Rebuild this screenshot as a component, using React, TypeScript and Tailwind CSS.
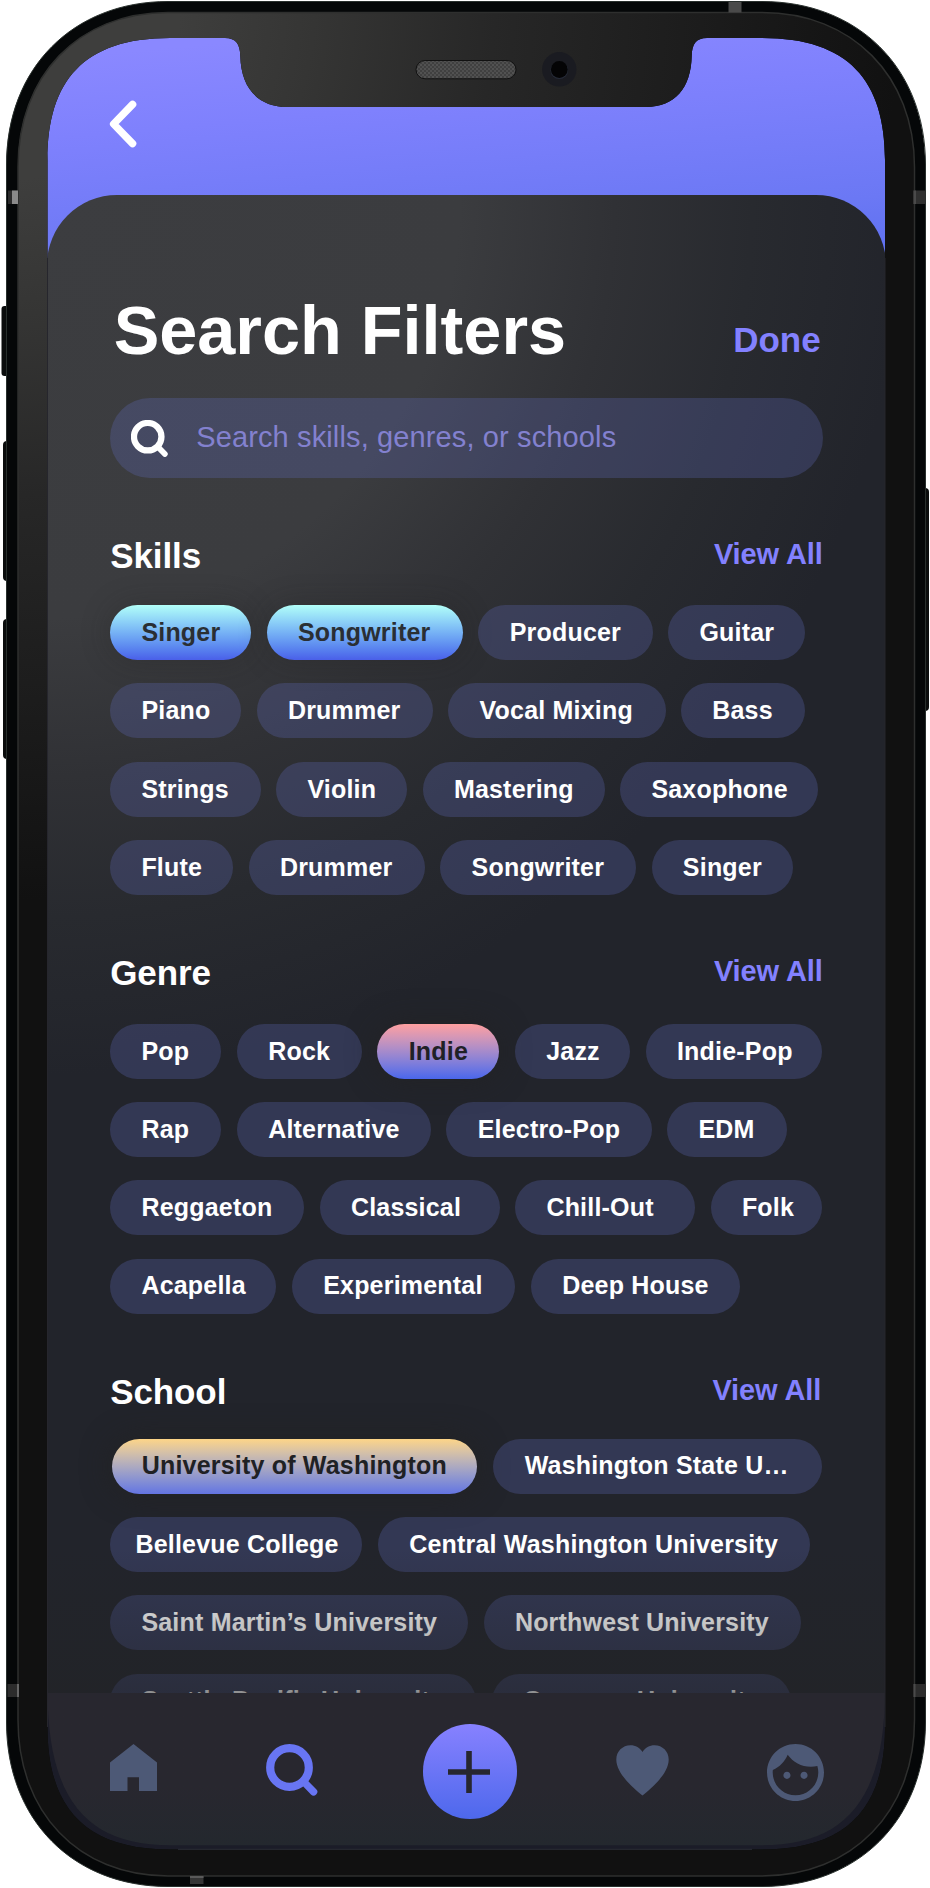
import React from "react";

type ChipData = { label: string; size: string; tone?: string };

const chip = (label: string, size: string, tone?: string): ChipData => ({ label, size, tone });

const aqua =
  "bg-linear-to-b from-[#b2fff8] to-[#4a5fe9] text-[#2a2f34] shadow-[0_0_30px_rgba(34,34,34,0.3)]";
const rose =
  "bg-linear-to-b from-[#ff9f9f] to-[#4a66ec] text-[#202126] shadow-[0_0_30px_rgba(34,34,34,0.7)]";
const amber =
  "ml-[1.5px] bg-linear-to-b from-[#fdd587] to-[#6474e2] text-[#202124] shadow-[0_0_30px_rgba(34,34,34,0.9)]";

const skills: ChipData[][] = [
  [
    chip("Singer", "w-[141px]", aqua),
    chip("Songwriter", "w-[196.3px]", aqua),
    chip("Producer", "w-[174.3px]"),
    chip("Guitar", "w-[137px]"),
  ],
  [
    chip("Piano", "w-[131px]"),
    chip("Drummer", "w-[176.2px]"),
    chip("Vocal Mixing", "w-[217.2px]"),
    chip("Bass", "w-[123.5px]"),
  ],
  [
    chip("Strings", "w-[150.5px]"),
    chip("Violin", "w-[131px]"),
    chip("Mastering", "w-[182px]"),
    chip("Saxophone", "w-[197.7px]"),
  ],
  [
    chip("Flute", "w-[123px]"),
    chip("Drummer", "w-[176.2px]"),
    chip("Songwriter", "w-[195.8px]"),
    chip("Singer", "w-[141px]"),
  ],
];

const genres: ChipData[][] = [
  [
    chip("Pop", "w-[111.3px]"),
    chip("Rock", "w-[125px]"),
    chip("Indie", "w-[122px]", rose),
    chip("Jazz", "w-[115.3px]"),
    chip("Indie-Pop", "w-[176.2px]"),
  ],
  [
    chip("Rap", "w-[111.3px]"),
    chip("Alternative", "w-[194px]"),
    chip("Electro-Pop", "w-[205.3px]"),
    chip("EDM", "w-[119.7px]"),
  ],
  [
    chip("Reggaeton", "w-[194px]"),
    chip("Classical", "w-[180px]"),
    chip("Chill-Out", "w-[180px]"),
    chip("Folk", "w-[111.5px]"),
  ],
  [
    chip("Acapella", "w-[166.3px]"),
    chip("Experimental", "w-[223.5px]"),
    chip("Deep House", "w-[209px]"),
  ],
];

const schools: ChipData[][] = [
  [
    chip("University of Washington", "w-[365px] pl-[30px]", amber),
    chip("Washington State U…", "w-[329px] ml-[1.3px]"),
  ],
  [
    chip("Bellevue College", "w-[252.3px] pl-[25.2px]"),
    chip("Central Washington University", "w-[432.3px]"),
  ],
  [chip("Saint Martin’s University", "w-[358px]"), chip("Northwest University", "w-[317px]")],
  [chip("Seattle Pacific University", "w-[366px]"), chip("Gonzaga University", "w-[299px]")],
];

function Chip({ label, size, tone }: ChipData) {
  const pad = size.includes("pl-") ? "" : "pl-[31.2px]";
  return (
    <button
      className={`flex h-[55px] shrink-0 items-center rounded-full text-left text-[25px] font-bold whitespace-nowrap ${size} ${pad} ${
        tone ?? "bg-[rgba(98,108,190,0.28)] text-white"
      }`}
    >
      {label}
    </button>
  );
}

function Section({
  title,
  rows,
  className,
  chipsClass,
  linkClass,
}: {
  title: string;
  rows: ChipData[][];
  className: string;
  chipsClass: string;
  linkClass: string;
}) {
  return (
    <section className={className}>
      <div className="flex h-[40px] items-start justify-between">
        <h2 className="text-[35px] leading-[39px] font-bold tracking-[-0.1px] text-white">{title}</h2>
        <a className={`text-[29px] leading-[36px] font-bold tracking-[-0.1px] text-[#8381ff] ${linkClass}`}>
          View All
        </a>
      </div>
      <div className={`flex flex-col gap-[23.3px] ${chipsClass}`}>
        {rows.map((row, r) => (
          <div key={r} className="flex gap-[15.5px]">
            {row.map((c, i) => (
              <Chip key={i} {...c} />
            ))}
          </div>
        ))}
      </div>
    </section>
  );
}

function SearchGlyph({ className, stroke }: { className: string; stroke: number }) {
  return (
    <svg viewBox="0 0 52 52" className={className} fill="none" stroke="currentColor" strokeLinecap="round">
      <circle cx="23.5" cy="23.5" r="19.3" strokeWidth={stroke} />
      <path d="M38 38 L47.6 47.8" strokeWidth={stroke - 0.8} />
    </svg>
  );
}

function TabBar() {
  return (
    <nav className="relative flex h-[157px] shrink-0 bg-linear-to-b from-[#28272f] from-60% to-[#23282e] pl-[63px] text-[#4d5976]">
      <svg viewBox="0 0 47 47" className="mt-[51px] h-[47px] w-[47px]" fill="currentColor">
        <path d="M23.5 0 L47 18.5 V47 H29 V33.3 H17.5 V47 H0 V18.5 Z" />
      </svg>
      <SearchGlyph className="mt-[51px] ml-[109px] h-[52px] w-[52px] text-[#6875f3]" stroke={8.2} />
      <button className="mt-[31.5px] ml-[104.5px] flex h-[94.5px] w-[94.5px] items-center justify-center rounded-full bg-linear-to-b from-[#8781ff] to-[#4d68ec]">
        <svg viewBox="0 0 42 42" className="mt-[1px] mr-[1.5px] h-[42px] w-[42px]" fill="none" stroke="#27272f" strokeWidth="5.6">
          <path d="M0 21 H42 M21 0 V42" />
        </svg>
      </button>
      <svg viewBox="0 0 53 51" className="mt-[52.5px] ml-[99px] h-[51px] w-[53px]" fill="currentColor">
        <path d="M26.5 50.5 C18 43.5 0.3 29 0.3 14.5 C0.3 6.5 6.5 0.3 14.5 0.3 C19.5 0.3 24 2.8 26.5 7 C29 2.8 33.5 0.3 38.5 0.3 C46.5 0.3 52.7 6.5 52.7 14.5 C52.7 29 35 43.5 26.5 50.5 Z" />
      </svg>
      <svg viewBox="2 2 20 20" className="mt-[51px] ml-[97.5px] h-[57px] w-[57px]" fill="currentColor">
        <path d="M9 11.75c-.69 0-1.25.56-1.25 1.25s.56 1.25 1.25 1.25 1.25-.56 1.25-1.25-.56-1.25-1.25-1.25zm6 0c-.69 0-1.25.56-1.25 1.25s.56 1.25 1.25 1.25 1.25-.56 1.25-1.25-.56-1.25-1.25-1.25zM12 2C6.48 2 2 6.48 2 12s4.48 10 10 10 10-4.48 10-10S17.52 2 12 2zm0 18c-4.41 0-8-3.59-8-8 0-.29.02-.58.05-.86 2.36-1.05 4.23-2.98 5.21-5.37C11.07 8.33 14.05 10 17.42 10c.78 0 1.53-.09 2.25-.26.21.71.33 1.47.33 2.26 0 4.41-3.59 8-8 8z" />
      </svg>
    </nav>
  );
}

const outerEdge =
  "M6.5 165 C6.5 68 73 1.5 168 1.5 H762 C858 1.5 925.5 68 925.5 165 V1722 C925.5 1820 858 1886.5 762 1886.5 H168 C73 1886.5 6.5 1820 6.5 1722 Z";
const rimEdge =
  "M18 167 C18 76 78 12.5 168 12.5 H762 C852 12.5 914.5 76 914.5 167 V1720 C914.5 1812 852 1876 762 1876 H168 C78 1876 18 1812 18 1720 Z";
const displayEdge =
  "M47.5 160 C47.5 81 83.5 38 170 38 H225 C236 38 240 44 240.3 56 C241 88 258 107 288 107 H646 C675 107 691 88 691.7 56 C692 44 696 38 707 38 H762 C849 38 885 81 885 160 V1727 C885 1806 849 1849.5 762 1849.5 H170 C83.5 1849.5 47.5 1806 47.5 1727 Z";
const glassEdge =
  "M47.5 1690 V1727 C47.5 1806 83.5 1849.5 170 1849.5 H762 C849 1849.5 885 1806 885 1727 V1690 C885 1800 845 1845.3 762 1845.3 H170 C87 1845.3 47.5 1800 47.5 1690 Z";

function DeviceShell() {
  return (
    <svg viewBox="0 0 930 1888" className="pointer-events-none absolute inset-0 h-[1888px] w-[930px]">
      <defs>
        <radialGradient id="bezel" gradientUnits="userSpaceOnUse" cx="0" cy="0" r="900">
          <stop offset="0.2" stopColor="#3e3e3d" />
          <stop offset="0.35" stopColor="#353534" />
          <stop offset="0.55" stopColor="#272727" />
          <stop offset="0.8" stopColor="#1b1b1b" />
          <stop offset="1" stopColor="#111111" />
        </radialGradient>
        <pattern id="mesh" width="4" height="4" patternUnits="userSpaceOnUse">
          <rect width="4" height="4" fill="#404040" />
          <circle cx="1" cy="1" r="0.9" fill="#5a5a5a" />
          <circle cx="3" cy="3" r="0.9" fill="#565656" />
        </pattern>
      </defs>
      <g fill="#0b0d0d">
        <rect x="1.5" y="306" width="8" height="70" rx="3" />
        <rect x="3" y="441" width="8" height="140" rx="4" />
        <rect x="3" y="619" width="8" height="140" rx="4" />
        <rect x="920" y="488" width="9" height="223" rx="4" />
      </g>
      <path d={glassEdge} fill="#1b1c28" />
      <path d={`${outerEdge} ${displayEdge}`} fillRule="evenodd" fill="#050708" />
      <path d={`${rimEdge} ${displayEdge}`} fillRule="evenodd" fill="url(#bezel)" />
      <path d={outerEdge} fill="none" stroke="#29302d" strokeWidth="1" />
      <path d={rimEdge} fill="none" stroke="#2e2f2e" strokeWidth="1.5" />
      <path d="M47.5 258 V1727 M885 258 V1727" stroke="#26262d" strokeWidth="1" />
      <path d="M178 1849.3 H752" stroke="#2b2d36" strokeWidth="1" />
      <g fill="#4a4a4a">
        <rect x="728.5" y="2" width="13" height="10.5" />
        <rect x="8" y="190.5" width="10.5" height="13.5" fill="#2b2b2b" />
        <rect x="12" y="190.5" width="6" height="13.5" fill="#8a8a8a" />
        <rect x="913.5" y="190.5" width="12" height="13.5" fill="#303030" />
        <rect x="913.5" y="190.5" width="2.5" height="13.5" />
        <rect x="7.5" y="1684" width="11.5" height="13" fill="#2c2c2c" />
        <rect x="17" y="1684" width="2" height="13" fill="#666" />
        <rect x="913.5" y="1684" width="12" height="13" fill="#2c2c2c" />
        <rect x="913.5" y="1684" width="2" height="13" />
        <rect x="190" y="1876" width="13.5" height="8" fill="#353535" />
        <rect x="190" y="1876" width="13.5" height="2" fill="#5a5a5a" />
      </g>
      <rect x="416" y="60.5" width="100" height="18.3" rx="9.1" fill="url(#mesh)" stroke="#111" strokeWidth="1" />
      <circle cx="559.3" cy="69.3" r="17.2" fill="#1a1b21" />
      <circle cx="559.3" cy="70.3" r="8.8" fill="#262b38" />
      <circle cx="559.3" cy="69.5" r="8.4" fill="#040405" />
    </svg>
  );
}

export default function App() {
  return (
    <div className="relative h-[1888px] w-[930px] overflow-hidden bg-white px-[47px] pt-[38px] font-['Liberation_Sans',Arial,sans-serif]">
      <main className="flex h-[1811.5px] w-[838.5px] flex-col overflow-hidden rounded-[90px] bg-[linear-gradient(175deg,#8a88ff_20px,#7f81fd_100px,#6b78f4_230px,#5e70f1_290px)]">
        <header className="h-[157px] shrink-0 pt-[62px] pl-[62px]">
          <svg viewBox="0 0 28 48" className="h-[48px] w-[28px]" fill="none" stroke="white" strokeWidth="7.4" strokeLinecap="round" strokeLinejoin="round">
            <path d="M23.6 4.4 L4.6 24 L23.6 43.6" />
          </svg>
        </header>

        <div className="relative h-[1497.7px] shrink-0 overflow-hidden rounded-t-[70px] bg-[radial-gradient(ellipse_860px_880px_at_0_0,#3c3d40_0%,#3b3c3f_48%,#303135_66%,#282a2f_82%,#22242b_100%)] pt-[100.6px] pr-[62.8px] pl-[63.2px]">
          <div className="flex h-[68px] items-start justify-between pr-[2px] pl-[3.5px]">
            <h1 className="text-[68.4px] leading-[68px] font-bold text-white">Search Filters</h1>
            <button className="mt-[21.5px] text-[35px] leading-[46px] font-bold text-[#8381ff]">Done</button>
          </div>

          <label className="mt-[34.4px] flex h-[80.5px] items-center rounded-full bg-[rgba(98,108,190,0.28)] pl-[20.5px]">
            <SearchGlyph className="h-[37px] w-[37px] text-white" stroke={8.8} />
            <span className="ml-[28.5px] text-[29px] tracking-[0.13px] text-[#8381cf]">
              Search skills, genres, or schools
            </span>
          </label>

          <Section title="Skills" rows={skills} className="mt-[58px] tracking-[0.2px]" chipsClass="mt-[28.7px]" linkClass="" />
          <Section title="Genre" rows={genres} className="mt-[57.6px] tracking-[0.2px]" chipsClass="mt-[31.1px]" linkClass="" />
          <Section title="School" rows={schools} className="mt-[58px] tracking-[0.2px]" chipsClass="mt-[27px]" linkClass="mr-[1.5px]" />

          <div className="pointer-events-none absolute inset-x-0 bottom-0 h-[145px] bg-linear-to-b from-[rgba(34,35,37,0)] to-[rgba(34,35,37,0.5)]" />
        </div>

        <TabBar />
      </main>
      <DeviceShell />
    </div>
  );
}
